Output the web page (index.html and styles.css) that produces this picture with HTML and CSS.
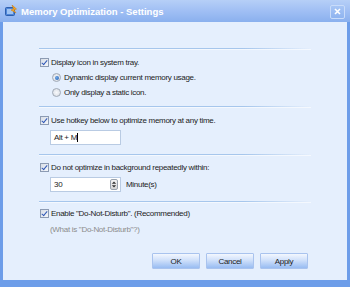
FILE: index.html
```html
<!DOCTYPE html>
<html lang="en">
<head>
  <meta charset="UTF-8">
  <title>Memory Optimization - Settings</title>
  <link rel="stylesheet" href="styles.css">
</head>
<body class="mo-body">

<div class="mo-window">
  <div class="mo-titlebar">
    <svg class="mo-title-icon" width="12" height="12" viewBox="0 0 12 12">
      <rect x="0.5" y="2.5" width="9" height="8" rx="1" fill="#4f86d9" stroke="#2d5fae"/>
      <rect x="2" y="4" width="6" height="5" fill="#9fc3f2"/>
      <path d="M7 0 L11.5 4 L9 5 L11 8 L6 5 L8.5 4 Z" fill="#f5a623" stroke="#c8780a" stroke-width="0.5"/>
    </svg>
    <span class="mo-title">Memory Optimization - Settings</span>
    <div class="mo-close">
      <svg width="7" height="7" viewBox="0 0 7 7">
        <path d="M1 1 L6 6 M6 1 L1 6" stroke="#fff" stroke-width="1.6"/>
      </svg>
    </div>
  </div>

  <div class="mo-content">
    <div class="mo-sep mo-sep-first"></div>

    <div class="mo-section mo-section-tray">
      <label class="mo-row">
        <span class="mo-check"></span>
        <span>Display icon in system tray.</span>
      </label>
      <label class="mo-row mo-sub">
        <span class="mo-radio mo-radio-on"></span>
        <span>Dynamic display current memory usage.</span>
      </label>
      <label class="mo-row mo-sub">
        <span class="mo-radio"></span>
        <span>Only display a static icon.</span>
      </label>
    </div>

    <div class="mo-sep"></div>

    <div class="mo-section mo-section-hotkey">
      <label class="mo-row">
        <span class="mo-check"></span>
        <span>Use hotkey below to optimize memory at any time.</span>
      </label>
      <div class="mo-field">
        <div class="mo-input">Alt + M<span class="mo-caret"></span></div>
      </div>
    </div>

    <div class="mo-sep"></div>

    <div class="mo-section mo-section-bg">
      <label class="mo-row">
        <span class="mo-check"></span>
        <span>Do not optimize in background repeatedly within:</span>
      </label>
      <div class="mo-field">
        <div class="mo-input mo-spin">
          <span>30</span>
          <span class="mo-spin-btn">
            <svg width="7" height="9" viewBox="0 0 7 9">
              <path d="M3.5 1 L6 3.5 L1 3.5 Z M3.5 8 L6 5.5 L1 5.5 Z" fill="#333"/>
            </svg>
          </span>
        </div>
        <span class="mo-unit">Minute(s)</span>
      </div>
    </div>

    <div class="mo-sep"></div>

    <div class="mo-section mo-section-dnd">
      <label class="mo-row">
        <span class="mo-check"></span>
        <span>Enable "Do-Not-Disturb". (Recommended)</span>
      </label>
      <div class="mo-hint">(What is "Do-Not-Disturb"?)</div>
    </div>

    <div class="mo-buttons">
      <button class="mo-btn">OK</button>
      <button class="mo-btn">Cancel</button>
      <button class="mo-btn">Apply</button>
    </div>
  </div>
</div>

</body>
</html>
```

FILE: styles.css
```css
/* base */
.mo-body {
  margin: 0;
  padding: 0;
  font-family: "Liberation Sans", Arial, sans-serif;
  font-size: 8px;
  letter-spacing: -0.3px;
  color: #1c1c1c;
  background: #6d9de9;
}

.mo-window {
  width: 350px;
  height: 287px;
  display: flex;
  flex-direction: column;
  background: #6d9de9;
}

/* title bar */
.mo-titlebar {
  height: 22px;
  display: flex;
  align-items: center;
  padding: 0 5px 0 5px;
  background: linear-gradient(#b6cff7, #a0bff4 50%, #8ab0ee);
  box-sizing: border-box;
}

.mo-title-icon {
  margin-right: 4px;
}

.mo-title {
  flex: 1;
  color: #fff;
  font-family: "Liberation Sans", Arial, sans-serif;
  font-weight: bold;
  font-size: 9.5px;
  letter-spacing: 0;
}

.mo-close {
  width: 15px;
  height: 14px;
  box-sizing: border-box;
  border: 1px solid #c9dcfa;
  border-radius: 2px;
  background: linear-gradient(#a7c5f5, #8fb4f0);
  display: flex;
  align-items: center;
  justify-content: center;
  margin-top: 1px;
}

/* content */
.mo-content {
  flex: 1;
  margin: 0 3px 7px 3px;
  background: #e5effd;
  padding: 26px 0 0 36px;
  display: flex;
  flex-direction: column;
}

.mo-sep {
  width: 272px;
  height: 1px;
  background: linear-gradient(to right, #a6c6ec, #a6c6ec 75%, rgba(166, 198, 236, 0));
  box-shadow: 0 1px 0 #f4f8fe;
  flex: none;
}

.mo-section-tray {
  padding: 6px 0 6px;
}

.mo-section-hotkey {
  padding: 6px 0 9px;
}

.mo-section-bg {
  padding: 5px 0 9px;
}

.mo-section-dnd {
  padding: 4px 0 0;
}

.mo-row {
  display: flex;
  align-items: center;
  height: 15px;
  padding-left: 1px;
}

.mo-sub {
  padding-left: 13px;
}

.mo-check {
  width: 9px;
  height: 9px;
  box-sizing: border-box;
  border: 1px solid #8c9bb3;
  background: linear-gradient(135deg, #d8dee8, #f4f6f9);
  margin-right: 2px;
  position: relative;
}

.mo-check::after {
  content: "";
  position: absolute;
  left: 2px;
  top: 0;
  width: 2px;
  height: 5px;
  border: solid #2f58b8;
  border-width: 0 1.5px 1.5px 0;
  transform: rotate(40deg);
}

.mo-radio {
  width: 9px;
  height: 9px;
  box-sizing: border-box;
  border: 1px solid #a0a9b6;
  border-radius: 50%;
  background: radial-gradient(#f8f9fb, #d5dae2);
  margin-right: 3px;
  position: relative;
}

.mo-radio-on::after {
  content: "";
  position: absolute;
  left: 1.5px;
  top: 1.5px;
  width: 4px;
  height: 4px;
  border-radius: 50%;
  background: radial-gradient(circle at 40% 40%, #6fa6e6, #1f5cae);
}

.mo-field {
  display: flex;
  align-items: center;
  padding: 2px 0 0 11px;
}

.mo-input {
  width: 71px;
  height: 15px;
  box-sizing: border-box;
  border: 1px solid #b9cbe3;
  background: #fff;
  padding: 0 3px;
  display: flex;
  align-items: center;
  font-size: 8px;
}

.mo-caret {
  width: 1px;
  height: 9px;
  background: #000;
}

.mo-spin {
  justify-content: space-between;
  padding-right: 2px;
}

.mo-spin-btn {
  width: 8px;
  height: 11px;
  box-sizing: border-box;
  border: 1px solid #9aa3ae;
  border-radius: 2px;
  background: linear-gradient(#f4f4f4, #d6d6d6);
  display: flex;
  align-items: center;
  justify-content: center;
}

.mo-unit {
  margin-left: 5px;
}

.mo-hint {
  height: 15px;
  line-height: 15px;
  padding: 1px 0 0 11px;
  color: #8c8c8c;
}

/* buttons */
.mo-buttons {
  margin-top: auto;
  margin-bottom: 11px;
  padding-right: 39px;
  display: flex;
  justify-content: flex-end;
  gap: 6px;
}

.mo-btn {
  width: 48px;
  height: 16px;
  padding: 0;
  border: 1px solid #a9c3ee;
  border-radius: 1px;
  background: linear-gradient(#f3f7fe, #cfe0fa 45%, #98bcf2);
  font-family: "Liberation Sans", Arial, sans-serif;
  font-size: 8px;
  letter-spacing: -0.3px;
  color: #1c1c1c;
}
```
